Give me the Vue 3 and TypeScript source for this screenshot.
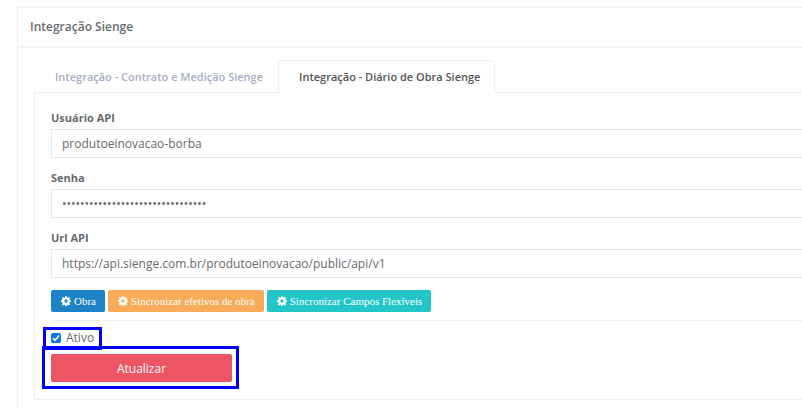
<script setup lang="ts">
import { ref } from 'vue'

interface Tab {
  id: string
  label: string
}

interface SyncAction {
  label: string
  tone: string
}

const tabs: Tab[] = [
  { id: 'contrato', label: 'Integração - Contrato e Medição Sienge' },
  { id: 'diario', label: 'Integração - Diário de Obra Sienge' },
]
const activeTab = ref('diario')

const actions: SyncAction[] = [
  { label: 'Obra', tone: 'blue' },
  { label: 'Sincronizar efetivos de obra', tone: 'orange' },
  { label: 'Sincronizar Campos Flexíveis', tone: 'teal' },
]

const usuario = ref('produtoeinovacao-borba')
const senha = ref('x'.repeat(32))
const url = ref('https://api.sienge.com.br/produtoeinovacao/public/api/v1')
const ativo = ref(true)
</script>

<template>
  <main class="page">
    <section class="card">
      <header class="card-header">
        <h1>Integração Sienge</h1>
      </header>
      <div class="card-body">
        <div class="tabs" role="tablist">
          <button
            v-for="tab in tabs"
            :key="tab.id"
            type="button"
            role="tab"
            class="tab"
            :class="{ active: tab.id === activeTab }"
            :aria-selected="tab.id === activeTab"
            @click="activeTab = tab.id"
          >
            {{ tab.label }}
          </button>
        </div>
        <form class="pane" @submit.prevent>
          <div class="field">
            <label for="usuario">Usuário API</label>
            <input id="usuario" v-model="usuario" type="text" autocomplete="off" />
          </div>
          <div class="field">
            <label for="senha">Senha</label>
            <input id="senha" v-model="senha" type="password" autocomplete="off" />
          </div>
          <div class="field">
            <label for="url">Url API</label>
            <input id="url" v-model="url" type="text" autocomplete="off" />
          </div>
          <div class="actions">
            <button
              v-for="action in actions"
              :key="action.label"
              type="button"
              class="action"
              :class="action.tone"
            >
              <svg class="gear" viewBox="0 0 20 20" aria-hidden="true">
                <path
                  fill="currentColor"
                  fill-rule="evenodd"
                  d="M8.300 0.500h3.400l.5 2.600 1.500.6 2.200-1.500 2.400 2.400-1.500 2.200.6 1.500 2.600.5v3.400l-2.600.5-.6 1.500 1.500 2.200-2.400 2.400-2.200-1.500-1.500.6-.5 2.600H8.300l-.5-2.600-1.500-.6-2.200 1.500-2.400-2.400 1.500-2.200-.6-1.500-2.600-.5V8.300l2.600-.5.6-1.500L1.700 4.600 4.100 2.200l2.200 1.500 1.500-.6zM10 6.700a3.300 3.300 0 1 0 0 6.600 3.300 3.300 0 0 0 0-6.600z"
                />
              </svg>
              <span>{{ action.label }}</span>
            </button>
          </div>
          <div class="footer">
            <label class="check marked">
              <input v-model="ativo" type="checkbox" />
              <svg class="tick" viewBox="0 0 10 10" aria-hidden="true">
                <path d="M2 5.200 4.100 7.300 8.200 2.500" fill="none" stroke="currentColor" stroke-width="1.600" />
              </svg>
              <span>Ativo</span>
            </label>
            <div class="submit marked">
              <button type="submit">Atualizar</button>
            </div>
          </div>
        </form>
      </div>
    </section>
  </main>
</template>

<style>
body {
  background: #fff;
  overflow: hidden;
}
</style>

<style scoped>
.page {
  box-sizing: border-box;
  min-height: 100vh;
  padding: 6px 0 0 17px;
  display: flex;
  font-family: 'Open Sans', 'Noto Sans', sans-serif;
  font-size: 12px;
  color: #676a6c;
}
.page * {
  box-sizing: border-box;
}
.card {
  flex: 1;
  border-left: 1px solid #eeeeef;
  border-top: 2px solid #f3f3f4;
}
.card-header {
  height: 40px;
  padding: 0 12px 2px;
  display: flex;
  align-items: center;
  border-bottom: 2px solid #f3f3f4;
}
h1 {
  margin: 0;
  font-size: 12px;
  font-weight: 600;
}
.card-body {
  padding: 12px 0 8px 16px;
}
.tabs {
  display: flex;
}
.tab {
  height: 33px;
  margin: 0 0 -1px;
  padding: 0 14px 2px 20px;
  border: 1px solid transparent;
  border-bottom: 0;
  border-radius: 3px 3px 0 0;
  background: transparent;
  font: inherit;
  font-size: 11px;
  font-weight: 600;
  color: #a7adc4;
}
.tab.active {
  border-color: #eeeeef;
  background: #fff;
  color: #555;
  position: relative;
}
.pane {
  border: 1px solid #eeeeef;
  border-right: 0;
  padding: 17px 0 17px 16px;
}
.field {
  margin-bottom: 12px;
}
.field label {
  display: block;
  height: 19px;
  line-height: 16px;
  font-size: 11px;
  font-weight: 700;
}
.field input {
  display: block;
  width: 100%;
  height: 29px;
  padding: 0 10px;
  border: 1px solid #e7e8ea;
  border-right: 0;
  border-radius: 1px 0 0 1px;
  background: #fff;
  font: inherit;
  color: #676a6c;
  outline: 0;
}
.actions {
  display: flex;
  gap: 3px;
  padding-bottom: 8px;
  border-bottom: 1px solid #eeeeef;
}
.action {
  display: flex;
  align-items: center;
  gap: 3px;
  height: 22px;
  padding: 0 9px 0 10px;
  border: 0;
  border-radius: 2px;
  font-family: 'Liberation Serif', serif;
  font-size: 11px;
  color: #fff;
}
.gear {
  width: 10px;
  height: 10px;
}
.blue {
  background: #1c84c6;
}
.orange {
  background: #f8ac59;
}
.teal {
  background: #23c6c8;
}
.footer {
  display: flex;
  flex-direction: column;
  align-items: flex-start;
  padding-top: 8px;
}
.marked {
  position: relative;
}
.marked::after {
  content: '';
  position: absolute;
  border: 3px solid #0000fe;
  pointer-events: none;
}
.check {
  display: flex;
  align-items: center;
  gap: 5px;
  height: 18px;
  margin-bottom: 7px;
}
.check span {
  padding-bottom: 2px;
}
.check::after {
  inset: -2px -8px -3px -8px;
}
.check input {
  appearance: none;
  width: 10px;
  height: 10px;
  margin: 0;
  border: 1px solid #767676;
  border-radius: 2px;
  background: #fff;
}
.check input:checked {
  border-color: #0b75e8;
  background: #0b75e8;
}
.tick {
  position: absolute;
  left: 0;
  width: 10px;
  height: 10px;
  color: #fff;
  pointer-events: none;
}
.submit::after {
  inset: -8px -7px -7px -9px;
}
.submit button {
  display: block;
  width: 181px;
  height: 28px;
  padding: 0;
  border: 0;
  border-radius: 2px;
  background: #ed5565;
  color: #fff;
  font: inherit;
}
</style>
